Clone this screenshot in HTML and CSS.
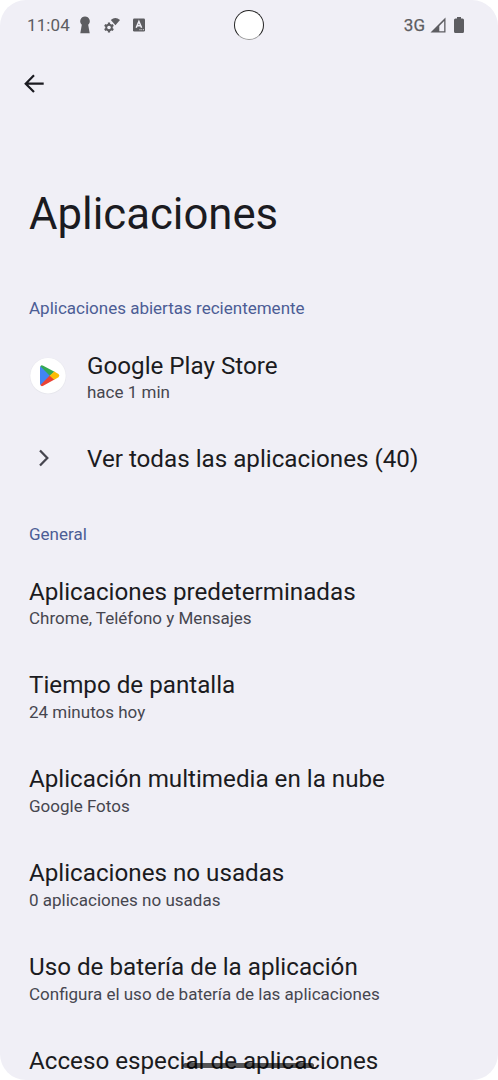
FILE: index.html
```html
<!DOCTYPE html>
<html lang="es">
<head>
<meta charset="utf-8">
<title>Aplicaciones</title>
<link rel="stylesheet" href="styles.css">
</head>
<body>
<div class="screen">
  <header class="status">
    <div class="status-side">
      <span class="clock">11:04</span>
      <svg class="keyhole" width="12" height="18" viewBox="0 0 12 18"><path d="M6 .5a4.700 4.700 0 0 0-3.200 8.200L1.300 17.300h9.400L9.200 8.700A4.700 4.700 0 0 0 6 .5z"/></svg>
      <svg class="gearwifi" width="16" height="16" viewBox="0 0 16 16"><path d="M6.800 3Q11.400-1.200 16 3L11.400 8.200z"/><path d="M5 5.500v10M.7 8l8.600 5M.7 13l8.600-5" stroke="#5d5d61" stroke-width="2.300"/><circle cx="5" cy="10.500" r="3.700"/><circle class="hole" cx="5" cy="10.500" r="1.800"/></svg>
      <svg class="abadge" width="12" height="14" viewBox="0 0 12 14"><rect y=".5" width="12" height="13" rx="1.200"/><path class="letter" d="M3.200 9.800L5.900 3.400l2.700 6.400M4.200 7.800h3.400"/><path class="letter thin" d="M6.500 11.700h1M8.400 11.700h.8M10 11.700h.8"/></svg>
    </div>
    <div class="camera"></div>
    <div class="status-side right">
      <span class="network">3G</span>
      <svg class="signal" width="16" height="16" viewBox="0 0 16 16"><path d="M15.500.5v15H.5z"/><path class="hole" d="M9.300 8.900l4.900-5V14.200H9.300z"/></svg>
      <svg class="battery" width="10" height="16" viewBox="0 0 10 16"><path d="M3 0h4v1.500h1.500q1.500 0 1.500 1.500v11.500q0 1.500-1.500 1.500h-7Q0 16 0 14.500V3q0-1.500 1.500-1.500H3z"/></svg>
    </div>
  </header>
  <nav class="toolbar">
    <svg width="20" height="20" viewBox="0 0 20 20"><path class="back" d="M10 1.300L1.700 9.700l8.300 8.400M1.900 9.700h17.800"/></svg>
  </nav>
  <h1 class="title">Aplicaciones</h1>
  <main>
    <h2 class="section">Aplicaciones abiertas recientemente</h2>
    <div class="row recent">
      <div class="lead">
        <svg width="38" height="38" viewBox="0 0 38 38"><circle cx="19" cy="19" r="18.300" fill="#e7e7ed"/><circle cx="19" cy="18.700" r="17.700" fill="#fff"/><path fill="#4285f4" d="M12 9L21.500 18.500 12 28.500Q11 28 11 26.700V10.500Q11 9.300 12 9z"/><path fill="#34a853" d="M11.400 9.200Q12.300 7.800 14.200 8.700L25.500 14.700 21 19z"/><path fill="#ea4335" d="M11.400 28.100Q12.500 29.800 14.200 28.700L25.500 22.600 21 18.300z"/><path fill="#fbbc04" d="M20.700 18.700L25.200 14.500 29.500 17Q31.300 18.600 29.500 20.200L25.200 22.800z"/></svg>
      </div>
      <div class="text"><div class="name">Google Play Store</div><div class="summary">hace 1 min</div></div>
    </div>
    <div class="row all">
      <div class="lead arrow"><svg width="12" height="18" viewBox="0 0 12 18"><path class="chevron" d="M2 1.500L9.300 9 2 16.500"/></svg></div>
      <div class="text"><div class="name">Ver todas las aplicaciones (40)</div></div>
    </div>
    <h2 class="section general">General</h2>
    <div class="row"><div class="text"><div class="name">Aplicaciones predeterminadas</div><div class="summary">Chrome, Teléfono y Mensajes</div></div></div>
    <div class="row"><div class="text"><div class="name">Tiempo de pantalla</div><div class="summary">24 minutos hoy</div></div></div>
    <div class="row"><div class="text"><div class="name">Aplicación multimedia en la nube</div><div class="summary">Google Fotos</div></div></div>
    <div class="row"><div class="text"><div class="name">Aplicaciones no usadas</div><div class="summary">0 aplicaciones no usadas</div></div></div>
    <div class="row"><div class="text"><div class="name">Uso de batería de la aplicación</div><div class="summary">Configura el uso de batería de las aplicaciones</div></div></div>
    <div class="row"><div class="text"><div class="name">Acceso especial de aplicaciones</div></div></div>
  </main>
  <div class="handle"></div>
</div>
</body>
</html>
```
FILE: styles.css
```css
* { box-sizing: border-box; }
body { margin: 0; background: #fff; font-family: Roboto, sans-serif; color: #1b1b21; }
.screen { position: relative; height: 1080px; overflow: hidden; border-radius: 26px; background: #f0eff6; }
svg { display: block; flex: none; }
h1, h2 { margin: 0; font-weight: 400; }
.status { display: grid; grid-template-columns: 207px 30px 1fr; align-items: center; height: 50px; padding: 0 34px 0 27px; color: #5d5d61; fill: #5d5d61; }
.status-side { display: flex; align-items: center; font-size: 17px; line-height: 20px; }
.right { justify-content: flex-end; }
.clock { width: 43px; letter-spacing: 0.1px; white-space: nowrap; }
.keyhole { margin-left: 9px; }
.gearwifi { margin-left: 13px; }
.abadge { margin-left: 13px; }
.hole { fill: #f0eff6; }
.letter { fill: none; stroke: #f0eff6; stroke-width: 1.5; }
.thin { stroke-width: 1; }
.camera { width: 30px; height: 30px; border-radius: 50%; border: 1px solid #222; border-bottom-color: #999; background: #fff; }
.network { font-weight: 400; -webkit-text-stroke: 0.25px #5d5d61; }
.signal { margin-left: 5px; }
.battery { margin-left: 8px; }
.toolbar { height: 68px; padding: 24px 24px 0; }
.back { fill: none; stroke: #1b1b21; stroke-width: 2.2; }
.title { height: 180px; padding: 70px 29px 0; font-size: 43.7px; line-height: 52px; }
.section { padding: 0 29px; height: 30px; font-size: 17px; line-height: 20px; color: #4c5d95; }
.general { height: 30.8px; }
.row { display: flex; height: 93.9px; padding: 23px 29px 0; }
.recent { height: 93.8px; padding-top: 24px; }
.lead { width: 58px; padding-top: 5px; }
.arrow { padding: 4px 0 0 9px; }
.name { font-size: 24.2px; line-height: 28px; white-space: nowrap; }
.summary { margin-top: 2.4px; font-size: 17px; line-height: 20px; color: #46464f; white-space: nowrap; }
.all { height: 102px; }
.chevron { fill: none; stroke: #46464f; stroke-width: 2.3; }
.handle { position: absolute; left: 183px; top: 1063px; width: 131px; height: 5px; border-radius: 3px; background: rgba(0, 0, 0, .65); }
```
